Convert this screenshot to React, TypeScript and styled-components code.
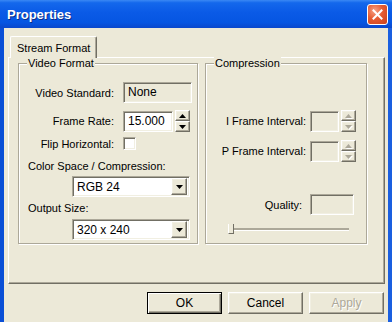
import styled, { createGlobalStyle, css } from "styled-components"

const Global = createGlobalStyle`
  body {
    margin: 0;
    font-family: "Liberation Sans", Arial, sans-serif;
    font-size: 11px;
    color: #000;
  }
`

const raised = css`
  border: 1px solid;
  border-color: #fff #716f64 #716f64 #fff;
  box-shadow: inset -1px -1px 0 #aca899, inset 1px 1px 0 #f1efe2;
`

const sunken = css`
  border: 1px solid;
  border-color: #aca899 #fff #fff #aca899;
  box-shadow: inset 1px 1px 0 #716f64, inset -1px -1px 0 #f1efe2;
`

const Window = styled.div`
  width: 392px;
  height: 322px;
  overflow: hidden;
  display: flex;
  flex-direction: column;
  background: linear-gradient(90deg, #0a4fd6, #1a5fe0);
`

const TitleBar = styled.div`
  height: 28px;
  flex: none;
  display: flex;
  align-items: center;
  justify-content: space-between;
  padding: 0 4px 0 7px;
  background: linear-gradient(#3a88f4 0%, #1468ec 10%, #0a5ae6 45%, #0656e2 80%, #0a48cc 100%);
  color: #fff;
  font-weight: bold;
  font-size: 13px;
  text-shadow: 1px 1px 0 #0b2f8a;
`

const CloseBox = styled.div`
  width: 19px;
  height: 19px;
  border: 1px solid #fff;
  border-radius: 3px;
  background: radial-gradient(circle at 35% 30%, #f6a286 0%, #e65c33 45%, #c9411d 100%);
  display: grid;
  place-items: center;
`

const Body = styled.div`
  flex: 1;
  margin: 0 4px;
  background: #ece9d8;
  padding: 8px 3px 0 4px;
  display: flex;
  flex-direction: column;
`

const TabStrip = styled.div`
  display: flex;
  height: 21px;
  padding-left: 2px;
`

const Tab = styled.div`
  position: relative;
  z-index: 1;
  height: 22px;
  box-sizing: border-box;
  padding: 0 6px 0 6px;
  display: flex;
  align-items: center;
  border: 1px solid;
  border-color: #fff #716f64 transparent #fff;
  border-bottom: none;
  box-shadow: inset -1px 0 0 #aca899;
  border-radius: 2px 2px 0 0;
  background: #ece9d8;
`

const Panel = styled.div`
  height: 227px;
  box-sizing: border-box;
  flex: none;
  border: 1px solid;
  border-color: #fff #716f64 #716f64 #fff;
  box-shadow: inset -1px -1px 0 #aca899;
  padding: 5px 0 0 9px;
  display: flex;
  gap: 7px;
  align-items: flex-start;
`

const Group = styled.div<{ $w: number }>`
  position: relative;
  width: ${p => p.$w}px;
  height: 181px;
  box-sizing: border-box;
  border: 1px solid #aca899;
  box-shadow: inset 1px 1px 0 #fff, 1px 1px 0 #fff;
  display: flex;
  flex-direction: column;
`

const Legend = styled.div`
  position: absolute;
  top: -7px;
  left: 8px;
  padding: 0 1px;
  background: #ece9d8;
  line-height: 13px;
`

const Row = styled.div<{ $top: number; $label: number; $gap?: number }>`
  display: grid;
  grid-template-columns: ${p => p.$label}px auto;
  column-gap: ${p => p.$gap ?? 9}px;
  align-items: center;
  margin-top: ${p => p.$top}px;
`

const Label = styled.span`
  text-align: right;
  white-space: nowrap;
`

const Caption = styled.div<{ $top: number }>`
  margin: ${p => p.$top}px 0 0 9px;
  line-height: 13px;
`

const Field = styled.div<{ $w: number; $white?: boolean }>`
  ${sunken};
  box-sizing: border-box;
  width: ${p => p.$w}px;
  height: 21px;
  background: ${p => (p.$white ? "#fff" : "#ece9d8")};
  padding: 2px 4px;
  line-height: 15px;
  font-size: 12px;
`

const SpinWrap = styled.div`
  display: flex;
  align-items: center;
  gap: 2px;
`

const Spin = styled.div`
  display: flex;
  flex-direction: column;
`

const SpinBtn = styled.div`
  ${raised};
  box-sizing: border-box;
  width: 15px;
  height: 11px;
  background: #ece9d8;
  display: grid;
  place-items: center;
`

const Check = styled.div`
  ${sunken};
  box-sizing: border-box;
  width: 13px;
  height: 13px;
  background: #fff;
`

const Combo = styled.div<{ $top: number }>`
  ${sunken};
  box-sizing: border-box;
  width: 118px;
  height: 21px;
  margin: ${p => p.$top}px 0 0 53px;
  background: #fff;
  display: flex;
  align-items: center;
  justify-content: space-between;
  padding: 2px 2px 2px 4px;
  font-size: 12px;
`

const DropBtn = styled.div`
  ${raised};
  box-sizing: border-box;
  width: 16px;
  height: 17px;
  background: #ece9d8;
  display: grid;
  place-items: center;
`

const Slider = styled.div`
  position: relative;
  margin: 9px 0 0 22px;
  width: 121px;
  height: 10px;
`

const Track = styled.div`
  position: absolute;
  left: 0;
  right: 0;
  top: 4px;
  height: 0;
  border-top: 2px solid #aca899;
  border-bottom: 1px solid #fff;
`

const Thumb = styled.div`
  position: absolute;
  left: 0;
  top: 0;
  width: 4px;
  height: 9px;
  border-left: 1px solid #fff;
  border-right: 1px solid #716f64;
  border-bottom: 1px solid #716f64;
  background: #ece9d8;
`

const Buttons = styled.div`
  display: flex;
  justify-content: flex-end;
  gap: 6px;
  padding: 8px 1px 0 0;
`

const Button = styled.div<{ $default?: boolean; $disabled?: boolean }>`
  box-sizing: border-box;
  width: 75px;
  height: 22px;
  display: grid;
  place-items: center;
  font-size: 12px;
  background: #ece9d8;
  ${p =>
    p.$default
      ? css`
          border: 1px solid #000;
          box-shadow: inset 1px 1px 0 #fff, inset -1px -1px 0 #716f64, inset -2px -2px 0 #aca899;
        `
      : raised};
  color: ${p => (p.$disabled ? "#aca899" : "#000")};
  text-shadow: ${p => (p.$disabled ? "1px 1px 0 #fff" : "none")};
`

const Arrow = ({ up, off }: { up?: boolean; off?: boolean }) => (
  <svg width="7" height="4" viewBox="0 0 7 4" style={off ? { filter: "drop-shadow(1px 1px 0 #fff)" } : undefined}>
    <polygon points={up ? "3.5,0 7,4 0,4" : "0,0 7,0 3.5,4"} fill={off ? "#aca899" : "#000"} />
  </svg>
)

const Spinner = ({ off }: { off?: boolean }) => (
  <Spin>
    <SpinBtn><Arrow up off={off} /></SpinBtn>
    <SpinBtn><Arrow off={off} /></SpinBtn>
  </Spin>
)

export default function App() {
  return (
    <Window>
      <Global />
      <TitleBar>
        <span>Properties</span>
        <CloseBox>
          <svg width="11" height="11" viewBox="0 0 11 11">
            <path d="M1.5 1.5 L9.5 9.5 M9.5 1.5 L1.5 9.5" stroke="#fff" strokeWidth="2" strokeLinecap="square" />
          </svg>
        </CloseBox>
      </TitleBar>
      <Body>
        <TabStrip>
          <Tab>Stream Format</Tab>
        </TabStrip>
        <Panel>
          <Group $w={180}>
            <Legend>Video Format</Legend>
            <Row $top={18} $label={95}>
              <Label>Video Standard:</Label>
              <Field $w={69}>None</Field>
            </Row>
            <Row $top={7} $label={95}>
              <Label>Frame Rate:</Label>
              <SpinWrap>
                <Field $w={50} $white>15.000</Field>
                <Spinner />
              </SpinWrap>
            </Row>
            <Row $top={5} $label={95}>
              <Label>Flip Horizontal:</Label>
              <Check />
            </Row>
            <Caption $top={10}>Color Space / Compression:</Caption>
            <Combo $top={3}>
              RGB 24
              <DropBtn><Arrow /></DropBtn>
            </Combo>
            <Caption $top={5}>Output Size:</Caption>
            <Combo $top={4}>
              320 x 240
              <DropBtn><Arrow /></DropBtn>
            </Combo>
          </Group>
          <Group $w={162}>
            <Legend>Compression</Legend>
            <Row $top={46} $label={100} $gap={4}>
              <Label>I Frame Interval:</Label>
              <SpinWrap>
                <Field $w={29} />
                <Spinner off />
              </SpinWrap>
            </Row>
            <Row $top={8} $label={100} $gap={4}>
              <Label>P Frame Interval:</Label>
              <SpinWrap>
                <Field $w={29} />
                <Spinner off />
              </SpinWrap>
            </Row>
            <Row $top={32} $label={96} $gap={8}>
              <Label>Quality:</Label>
              <Field $w={44} />
            </Row>
            <Slider>
              <Track />
              <Thumb />
            </Slider>
          </Group>
        </Panel>
        <Buttons>
          <Button $default>OK</Button>
          <Button>Cancel</Button>
          <Button $disabled>Apply</Button>
        </Buttons>
      </Body>
    </Window>
  )
}
